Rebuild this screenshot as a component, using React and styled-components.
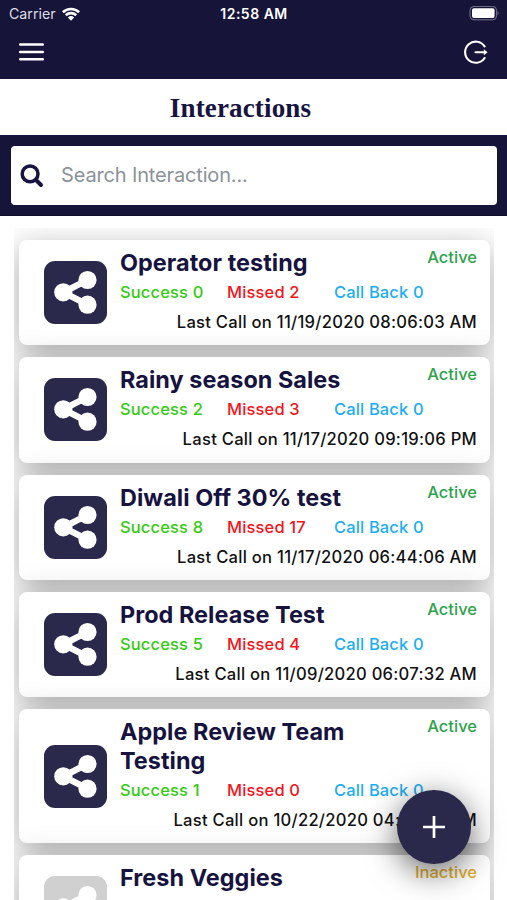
import React from "react";
import styled, { createGlobalStyle } from "styled-components";

const GlobalStyle = createGlobalStyle`
  * { box-sizing: border-box; }
  body { margin: 0; background: #fff; overflow: hidden; }
`;

const Screen = styled.div`
  position: relative;
  width: 507px;
  height: 900px;
  overflow: hidden;
  display: flex;
  flex-direction: column;
  background: #fff;
  font-family: Inter, "Liberation Sans", sans-serif;
`;

const TopBar = styled.header`
  flex: none;
  height: 79px;
  background: #161439;
  color: #fff;
`;

const StatusBar = styled.div`
  display: grid;
  grid-template-columns: 1fr auto 1fr;
  align-items: center;
  height: 27px;
  padding: 0 8px 0 9px;
  font-size: 14px;
  line-height: 27px;
`;

const Carrier = styled.div`
  display: flex;
  align-items: center;
  gap: 6px;
  color: #dddde6;
  font-size: 14.2px;
`;

const Clock = styled.div`
  font-size: 14px;
  font-weight: 600;
  letter-spacing: 0.5px;
`;

const BatterySlot = styled.div`
  display: flex;
  justify-content: flex-end;
`;

const NavRow = styled.nav`
  display: flex;
  justify-content: space-between;
  height: 52px;
  padding: 13px 18px 0 18px;
`;

const IconButton = styled.button`
  display: block;
  border: 0;
  padding: 0;
  height: 26px;
  background: none;
  color: #fff;
  svg { display: block; }
`;

const Heading = styled.h1`
  flex: none;
  margin: 0;
  height: 56px;
  padding-right: 26px;
  color: #171440;
  font: 700 27px/59px "Liberation Serif", serif;
  letter-spacing: 0.15px;
  text-align: center;
`;

const SearchBand = styled.div`
  flex: none;
  height: 81px;
  padding: 11px 10px 10px 11px;
  background: #161439;
  border-bottom: 1px solid #0d0b29;
`;

const SearchField = styled.label`
  display: flex;
  align-items: center;
  height: 58.5px;
  padding-left: 9px;
  gap: 17px;
  border-radius: 4px;
  background: #fff;
`;

const SearchInput = styled.input`
  flex: 1;
  min-width: 0;
  border: 0;
  padding: 0;
  outline: 0;
  background: none;
  font: 400 20px/26px Inter, sans-serif;
  letter-spacing: -0.15px;
  &::placeholder { color: #8b929a; opacity: 1; }
`;

const List = styled.main`
  flex: 1;
  min-height: 0;
  margin: 12px 13px 0 14px;
  padding: 12px 4px 0 4.5px;
  display: flex;
  flex-direction: column;
  gap: 12px;
  overflow: hidden;
`;

const Card = styled.article`
  position: relative;
  flex: none;
  display: flex;
  align-items: center;
  min-height: 105.3px;
  padding: 8px 13px 12px 25px;
  border-radius: 8px;
  background: #fff;
  box-shadow: 0 9px 34px rgba(0, 0, 0, 0.34);
`;

const Badge = styled.div`
  flex: none;
  width: 63px;
  height: 63px;
  margin: 4px 13.5px 0 0;
  border-radius: 11px;
  background: ${(p) => (p.$muted ? "#d0d0d0" : "#2a284b")};
  svg { display: block; }
`;

const Details = styled.div`
  flex: 1;
  min-width: 0;
`;

const TitleRow = styled.div`
  display: flex;
  justify-content: space-between;
  align-items: flex-start;
`;

const Title = styled.h2`
  margin: 0;
  max-width: 250px;
  color: #17133f;
  font-size: 23.4px;
  font-weight: 700;
  letter-spacing: 0.05px;
  line-height: 29px;
`;

const Status = styled.span`
  color: ${(p) => (p.$inactive ? "#dfae32" : "#2fa34c")};
  font-size: 16.5px;
  font-weight: 500;
  line-height: 19px;
`;

const Counts = styled.div`
  display: grid;
  grid-template-columns: 107px 107px 1fr;
  margin-top: 4.8px;
  font-size: 16.5px;
  font-weight: 500;
  letter-spacing: 0.14px;
  line-height: 21px;
`;

const Count = styled.span`
  color: ${(p) => p.$color};
  white-space: nowrap;
`;

const LastCall = styled.p`
  margin: 8.2px 0 0;
  color: #111;
  font-size: 16.6px;
  font-weight: 500;
  letter-spacing: 0.26px;
  line-height: 22px;
  text-align: right;
  white-space: nowrap;
`;

const AddButton = styled.button`
  position: absolute;
  left: 397px;
  top: 790px;
  width: 73.5px;
  height: 73.5px;
  display: grid;
  place-items: center;
  padding: 0;
  border: 0;
  border-radius: 50%;
  background: #2a284b;
  color: #fff;
  box-shadow: 0 8px 32px rgba(0, 0, 0, 0.6);
`;

const WifiIcon = () => (
  <svg width="18" height="14" viewBox="0 0 18 14" fill="#fff">
    <path d="M0 4.3A13 13 0 0 1 18 4.3L16.2 6.2A10.3 10.3 0 0 0 1.8 6.2Z" />
    <path d="M2.9 7.3A8.8 8.8 0 0 1 15.1 7.3L13.3 9.2A6.2 6.2 0 0 0 4.7 9.2Z" />
    <path d="M5.9 10.4A4.6 4.6 0 0 1 12.1 10.4L9 13.7Z" />
  </svg>
);

const BatteryIcon = () => (
  <svg width="30" height="15" viewBox="0 0 30 15">
    <rect x="1" y="0.4" width="26.6" height="13.4" rx="4" fill="none" stroke="#77768e" strokeWidth="1" />
    <rect x="3" y="2.3" width="22.6" height="9.6" rx="2" fill="#fff" />
    <path d="M28.6 5Q30.6 7.1 28.6 9.2Z" fill="#77768e" />
  </svg>
);

const MenuIcon = () => (
  <svg width="27" height="24" viewBox="0 0 27 24" stroke="#fff" strokeWidth="2.5" strokeLinecap="round">
    <path d="M2.2 3.5H24.8M2.2 10.9H24.8M2.2 18.3H24.8" />
  </svg>
);

const LogoutIcon = () => (
  <svg width="26" height="26" viewBox="0 0 26 26" fill="none" stroke="#fff" strokeWidth="2.1" strokeLinecap="round">
    <path d="M21.6 6.4A10.6 10.6 0 1 0 21.6 18" />
    <path d="M12.5 12.2H22" />
    <path d="M20.8 9.2L24.6 12.2L20.8 15.2Z" fill="#fff" stroke="none" />
  </svg>
);

const SearchIcon = () => (
  <svg width="24" height="25" viewBox="0 0 24 25" fill="none" stroke="#17143f">
    <circle cx="10.1" cy="10.9" r="7.9" strokeWidth="3.5" />
    <path d="M16 17L21 22" strokeWidth="4" strokeLinecap="round" />
  </svg>
);

const ShareIcon = () => (
  <svg width="63" height="63" viewBox="0 0 63 63" fill="#fff">
    <path d="M43.5 19L19.3 31.3L43.5 43.7" fill="none" stroke="#fff" strokeWidth="6.4" />
    <circle cx="43.5" cy="19" r="9.1" />
    <circle cx="19.3" cy="31.3" r="9.1" />
    <circle cx="43.5" cy="43.7" r="9.1" />
  </svg>
);

const PlusIcon = () => (
  <svg width="24" height="24" viewBox="0 0 24 24" stroke="#fff" strokeWidth="2.7">
    <path d="M1 12H23M12 1V23" />
  </svg>
);

const interactions = [
  { title: "Operator testing", success: 0, missed: 2, last: "11/19/2020 08:06:03 AM" },
  { title: "Rainy season Sales", success: 2, missed: 3, last: "11/17/2020 09:19:06 PM" },
  { title: "Diwali Off 30% test", success: 8, missed: 17, last: "11/17/2020 06:44:06 AM" },
  { title: "Prod Release Test", success: 5, missed: 4, last: "11/09/2020 06:07:32 AM" },
  { title: "Apple Review Team Testing", success: 1, missed: 0, last: "10/22/2020 04:10:26 AM" },
  { title: "Fresh Veggies", success: 0, missed: 0, last: "10/20/2020 05:12:40 AM", inactive: true },
];

const InteractionCard = ({ item }) => (
  <Card>
    <Badge $muted={item.inactive}>
      <ShareIcon />
    </Badge>
    <Details>
      <TitleRow>
        <Title>{item.title}</Title>
        <Status $inactive={item.inactive}>{item.inactive ? "Inactive" : "Active"}</Status>
      </TitleRow>
      <Counts>
        <Count $color="#35cb12">Success {item.success}</Count>
        <Count $color="#f5151b">Missed {item.missed}</Count>
        <Count $color="#1dadf3">Call Back 0</Count>
      </Counts>
      <LastCall>Last Call on {item.last}</LastCall>
    </Details>
  </Card>
);

export default function App() {
  return (
    <Screen>
      <GlobalStyle />
      <TopBar>
        <StatusBar>
          <Carrier>
            Carrier <WifiIcon />
          </Carrier>
          <Clock>12:58 AM</Clock>
          <BatterySlot>
            <BatteryIcon />
          </BatterySlot>
        </StatusBar>
        <NavRow>
          <IconButton aria-label="Menu">
            <MenuIcon />
          </IconButton>
          <IconButton aria-label="Log out">
            <LogoutIcon />
          </IconButton>
        </NavRow>
      </TopBar>
      <Heading>Interactions</Heading>
      <SearchBand>
        <SearchField>
          <SearchIcon />
          <SearchInput placeholder="Search Interaction..." />
        </SearchField>
      </SearchBand>
      <List>
        {interactions.map((item) => (
          <InteractionCard key={item.title} item={item} />
        ))}
      </List>
      <AddButton aria-label="Add interaction">
        <PlusIcon />
      </AddButton>
    </Screen>
  );
}
